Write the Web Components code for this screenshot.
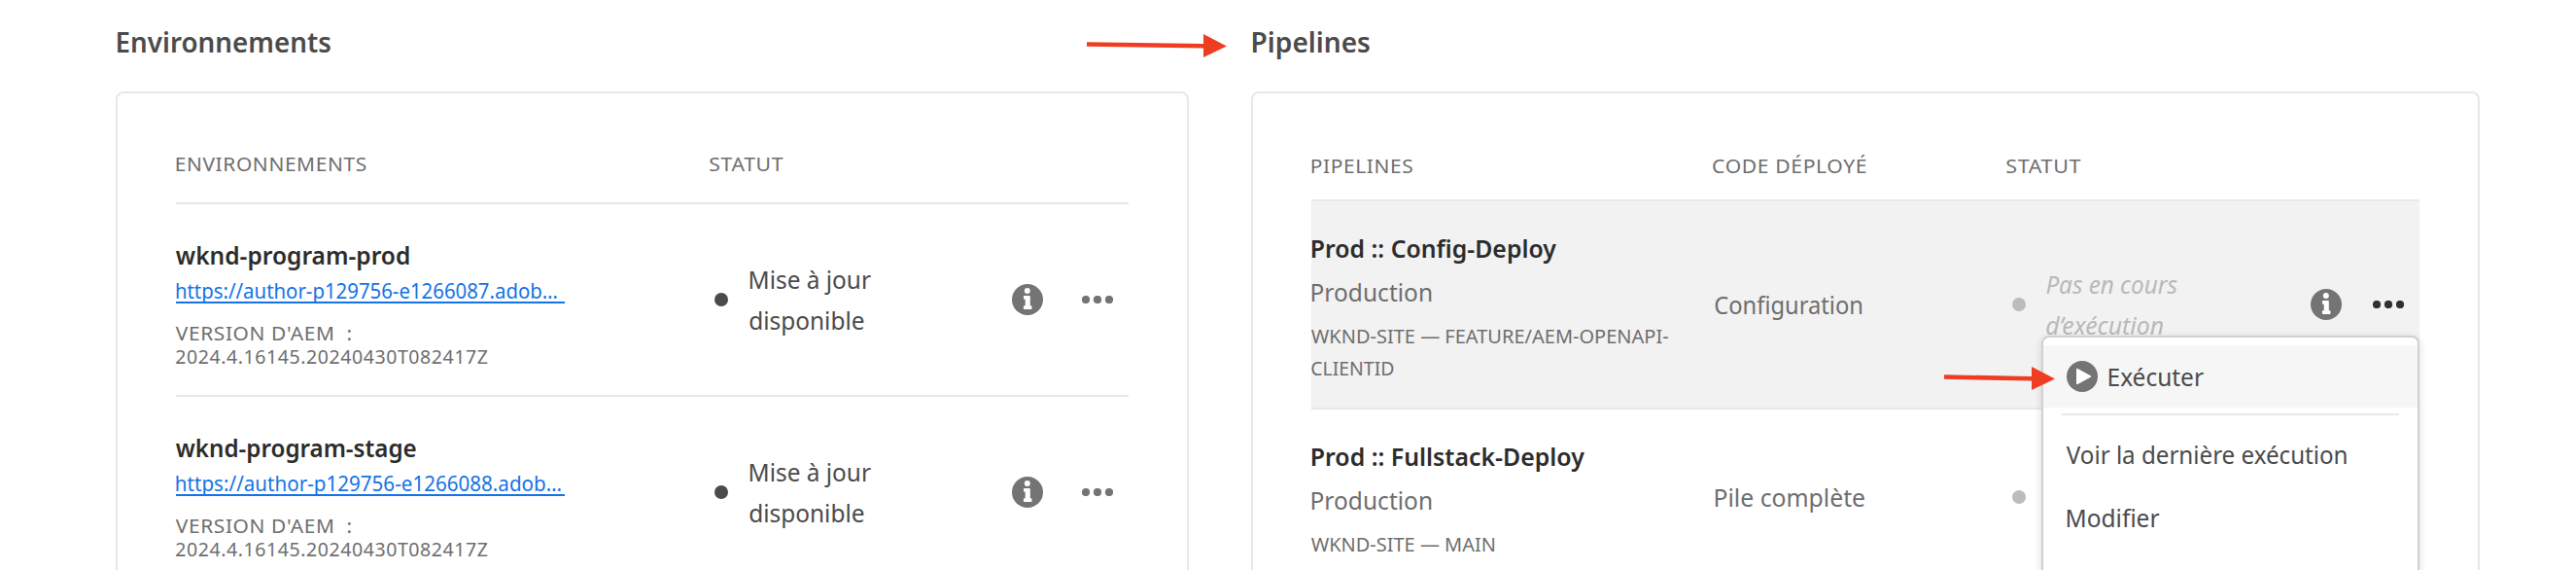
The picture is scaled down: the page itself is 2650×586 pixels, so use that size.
<!DOCTYPE html>
<html lang="fr"><head><meta charset="utf-8"><title>Cloud Manager</title>
<style>html,body{margin:0;background:#fff;height:586px;overflow:hidden}body{font-family:"Noto Sans","Open Sans",sans-serif;color:#4b4b4b}</style></head>
<body>
<cm-page></cm-page>
<script>
const define=(name,html,init)=>{
  const t=document.createElement('template');t.innerHTML=html;
  customElements.define(name,class extends HTMLElement{
    connectedCallback(){
      if(this.shadowRoot)return;
      this.attachShadow({mode:'open'}).append(t.content.cloneNode(true));
      if(init)init(this,this.shadowRoot);
    }
  });
};

/* One line of text, condensed so that its glyphs span exactly the width in "w".
   Measured at ten times the size, as canvas rounds ink bounds to whole pixels. */
const ctx=document.createElement('canvas').getContext('2d');
define('cm-text',`<style>
:host{display:block;white-space:pre;font-size:26px;line-height:34px;height:var(--lh,34px)}
:host([kind=heading]){font-size:28.5px;font-weight:600;line-height:40px;--lh:40px;color:#4b4b4b}
:host([kind=label]){font-size:20.5px;line-height:24px;--lh:24px;color:#6e6e6e;letter-spacing:.6px}
:host([kind=title]){font-weight:600;color:#2c2c2c}
:host([kind=branch]){font-size:20.5px;line-height:33px;--lh:33px;color:#6e6e6e}
:host([kind=link]){font-size:22px;line-height:27px;--lh:27px;color:#1473e6}
:host([kind=status]){line-height:42px;--lh:42px}
span{display:inline-block;transform-origin:0 0}
</style><span></span>`,(el,root)=>{
  const s=root.querySelector('span'),txt=el.getAttribute('t'),w=+el.getAttribute('w');
  s.textContent=txt;
  const c=getComputedStyle(el),ls=parseFloat(c.letterSpacing)||0;
  ctx.font=`${c.fontStyle} ${c.fontWeight} ${parseFloat(c.fontSize)*10}px ${c.fontFamily}`;
  ctx.letterSpacing=ls*10+'px';
  const m=ctx.measureText(txt),left=-m.actualBoundingBoxLeft/10,k=w/(m.actualBoundingBoxRight/10-left);
  s.style.transform=`translateX(${(-.2-left*k*.55).toFixed(2)}px) scaleX(${k.toFixed(4)})`;
});

define('cm-dot',`<style>:host{display:block;width:14px;height:14px;border-radius:50%;background:currentColor}</style>`);
define('cm-info',`<style>:host{display:block;width:32px;height:32px}svg{display:block}</style>
<svg width="32" height="32" viewBox="0 0 32 32"><circle cx="16" cy="16" r="16" fill="#747474"/><circle cx="15.8" cy="7.1" r="3" fill="#fff"/><path d="M12.8 12h5.2a.8.8 0 0 1 .8.8v9.4h.9a.8.8 0 0 1 .8.8v2.2a.8.8 0 0 1-.8.8h-7a.8.8 0 0 1-.8-.8V23a.8.8 0 0 1 .8-.8h1v-6.4h-.9a.8.8 0 0 1-.8-.8v-2.2a.8.8 0 0 1 .8-.8z" fill="#fff"/></svg>`);
define('cm-more',`<style>:host{display:block;width:32px;height:8px}svg{display:block}</style>
<svg width="32" height="8" viewBox="0 0 32 8" fill="currentColor"><circle cx="4" cy="4" r="4.1"/><circle cx="16" cy="4" r="4.1"/><circle cx="28" cy="4" r="4.1"/></svg>`);
define('cm-play',`<style>:host{display:block;width:32px;height:32px}svg{display:block}</style>
<svg width="32" height="32" viewBox="0 0 32 32"><circle cx="16" cy="16" r="16" fill="#747474"/><path d="M10 8.8v14.400a.9.9 0 0 0 1.400.75l13.300-7.200a.9.9 0 0 0 0-1.500L11.400 8.050A.9.9 0 0 0 10 8.800z" fill="#fff"/></svg>`);
define('cm-arrow',`<style>:host{display:block;position:absolute;z-index:9}svg{display:block}</style>
<svg height="26" fill="#ee3d23"><path/></svg>`,(el,root)=>{
  const L=+el.getAttribute('length'),b=L-24;
  root.querySelector('svg').setAttribute('width',L);
  root.querySelector('path').setAttribute('d',`M0 9.200L${b} 11V1L${L} 13.400L${b} 25V15.600L0 13.800z`);
});

define('cm-card',`<style>
:host{display:block}
.box{box-sizing:border-box;margin-top:31px;height:560px;border:2px solid #e8e8e8;border-radius:8px;padding:0 60px}
.head{padding-left:1px}
</style><div class="head"><slot name="heading"></slot></div><div class="box"><slot></slot></div>`);

define('cm-head',`<style>:host{display:grid;border-bottom:2px solid #e8e8e8;box-sizing:border-box}</style><slot></slot>`);
define('cm-row',`<style>
:host{display:grid;position:relative;align-items:center;box-sizing:border-box;border-bottom:2px solid #e8e8e8}
:host([active]){background:#f2f2f2}
</style><slot></slot>`);

define('cm-menu',`<style>
:host{display:block;position:absolute;z-index:5;top:138px;right:0;width:389.5px;height:300px;box-sizing:border-box;background:#fff;border:2px solid #d0d0d0;border-radius:8px;padding-top:8px;box-shadow:0 2px 8px rgba(0,0,0,.13)}
.item{display:flex;align-items:center;height:64px;padding-left:24px}
.run{background:#f6f6f6;gap:11px}
hr{border:0;height:2px;background:#e8e8e8;margin:6px 19px 8px}
.edit{margin-top:1px}
</style><div class="item run"><cm-play></cm-play><cm-text t="Exécuter" w="97"></cm-text></div><hr>
<div class="item"><cm-text t="Voir la dernière exécution" w="288"></cm-text></div>
<div class="item edit"><cm-text t="Modifier" w="94.500"></cm-text></div>`);

const env=(name,nw,url,uw)=>`<cm-row class="e"><div class="env"><cm-text kind="title" t="${name}" w="${nw}"></cm-text><div class="link"><cm-text kind="link" t="${url}" w="${uw}"></cm-text></div>
<cm-text kind="label" t="VERSION D'AEM&nbsp; :" w="180"></cm-text><cm-text kind="label" t="2024.4.16145.20240430T082417Z" w="320"></cm-text></div>
<cm-dot></cm-dot><div><cm-text kind="status" t="Mise à jour" w="124"></cm-text><cm-text kind="status" t="disponible" w="117"></cm-text></div>
<cm-info></cm-info><cm-more class="dim"></cm-more></cm-row>`;

define('cm-page',`<style>
:host{display:grid;grid-template-columns:1104px 1264px;gap:64px;padding:23px 0 0 119px;position:relative;height:586px;box-sizing:border-box;overflow:hidden}
.h1{grid-template-columns:549px 1fr;height:114px;padding-top:60px}
.h2{grid-template-columns:413px 302px 1fr;height:111px;padding-top:62px}
.e{grid-template-columns:554px 36px 270px 72px 1fr;height:198px}
.env{align-self:start;padding-top:35px}
.link{width:400px;margin:6px 0 18px;box-shadow:inset 0 -2px #1473e6}
.p{grid-template-columns:415px 306px 35px 272px 64px 1fr}
.name{align-self:start;padding:31px 0 24px}
.grey{color:#6e6e6e}.mid{color:#6e6e6e;margin:11px 0 12px}
.idle{color:#bcbcbc}.st{font-style:italic;color:#b9b9b9}
.dim{color:#747474}.more{color:#2f2f2f}.r2{height:180px}
.a1{left:1118px;top:34px}.a2{left:2000px;top:376px}
</style>
<cm-card><cm-text slot="heading" kind="heading" t="Environnements" w="219"></cm-text>
<cm-head class="h1"><cm-text kind="label" t="ENVIRONNEMENTS" w="194.500"></cm-text><cm-text kind="label" t="STATUT" w="75"></cm-text></cm-head>
${env('wknd-program-prod',240,'https://author-p129756-e1266087.adob…',391)}${env('wknd-program-stage',247,'https://author-p129756-e1266088.adob…',395)}</cm-card>
<cm-card><cm-text slot="heading" kind="heading" t="Pipelines" w="120"></cm-text>
<cm-head class="h2"><cm-text kind="label" t="PIPELINES" w="103"></cm-text><cm-text kind="label" t="CODE DÉPLOYÉ" w="157"></cm-text><cm-text kind="label" t="STATUT" w="76"></cm-text></cm-head>
<cm-row class="p" active><div class="name"><cm-text kind="title" t="Prod :: Config-Deploy" w="251.500"></cm-text><cm-text class="mid" t="Production" w="122.500"></cm-text><cm-text kind="branch" t="WKND-SITE — FEATURE/AEM-OPENAPI-" w="367"></cm-text><cm-text kind="branch" t="CLIENTID" w="84"></cm-text></div>
<cm-text class="grey" t="Configuration" w="151"></cm-text><cm-dot class="idle"></cm-dot><div class="st"><cm-text kind="status" t="Pas en cours" w="134.500"></cm-text><cm-text kind="status" t="d’exécution" w="119.500"></cm-text></div><cm-info></cm-info><cm-more class="more"></cm-more><cm-menu></cm-menu></cm-row>
<cm-row class="p r2"><div class="name"><cm-text kind="title" t="Prod :: Fullstack-Deploy" w="280.500"></cm-text><cm-text class="mid" t="Production" w="122.500"></cm-text><cm-text kind="branch" t="WKND-SITE — MAIN" w="188"></cm-text></div>
<cm-text class="grey" t="Pile complète" w="153"></cm-text><cm-dot class="idle"></cm-dot></cm-row></cm-card>
<cm-arrow class="a1" length="144"></cm-arrow><cm-arrow class="a2" length="114"></cm-arrow>`);
</script>
</body></html>
